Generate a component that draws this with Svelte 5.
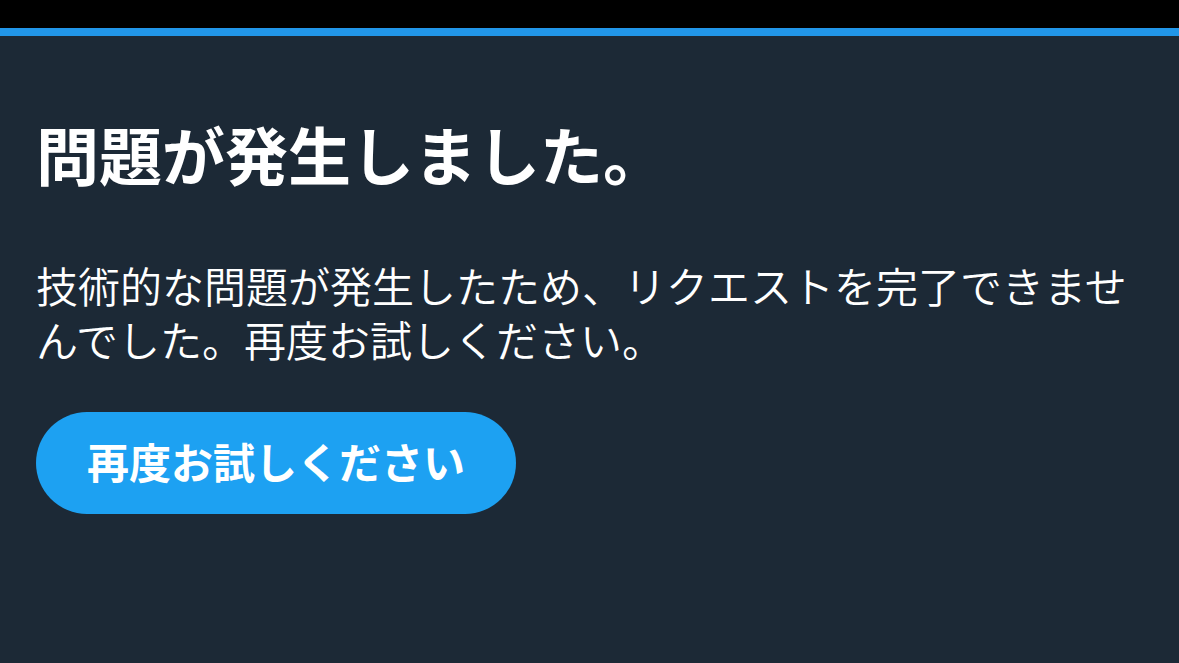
<script lang="ts">
	interface Props {
		onretry?: () => void;
	}

	let { onretry = () => location.reload() }: Props = $props();
</script>

<div class="status-bar"></div>

<main class="error-page" lang="ja">
	<h1>問題が発生しました。</h1>
	<p>技術的な問題が発生したため、リクエストを完了できませんでした。再度お試しください。</p>
	<button class="retry" type="button" onclick={onretry}>再度お試しください</button>
</main>

<style>
	:global(body) {
		margin: 0;
		background: #1c2936;
	}

	.status-bar {
		height: 28px;
		background: #000;
		border-bottom: 8px solid #2196e8;
	}

	.error-page {
		padding: 69px 36px;
		color: #fff;
		font-family: "Noto Sans CJK JP", sans-serif;
	}

	h1 {
		margin: 0 0 57px;
		font-size: 63px;
		font-weight: 700;
		line-height: 96px;
	}

	p {
		margin: 0 0 46px;
		font-size: 42px;
		font-weight: 350;
		line-height: 54px;
	}

	.retry {
		padding: 0 51px 4px;
		border: 0;
		border-radius: 51px;
		background: #1da1f2;
		color: inherit;
		font-family: inherit;
		font-size: 42px;
		font-weight: 700;
		line-height: 98px;
		cursor: pointer;
	}
</style>
